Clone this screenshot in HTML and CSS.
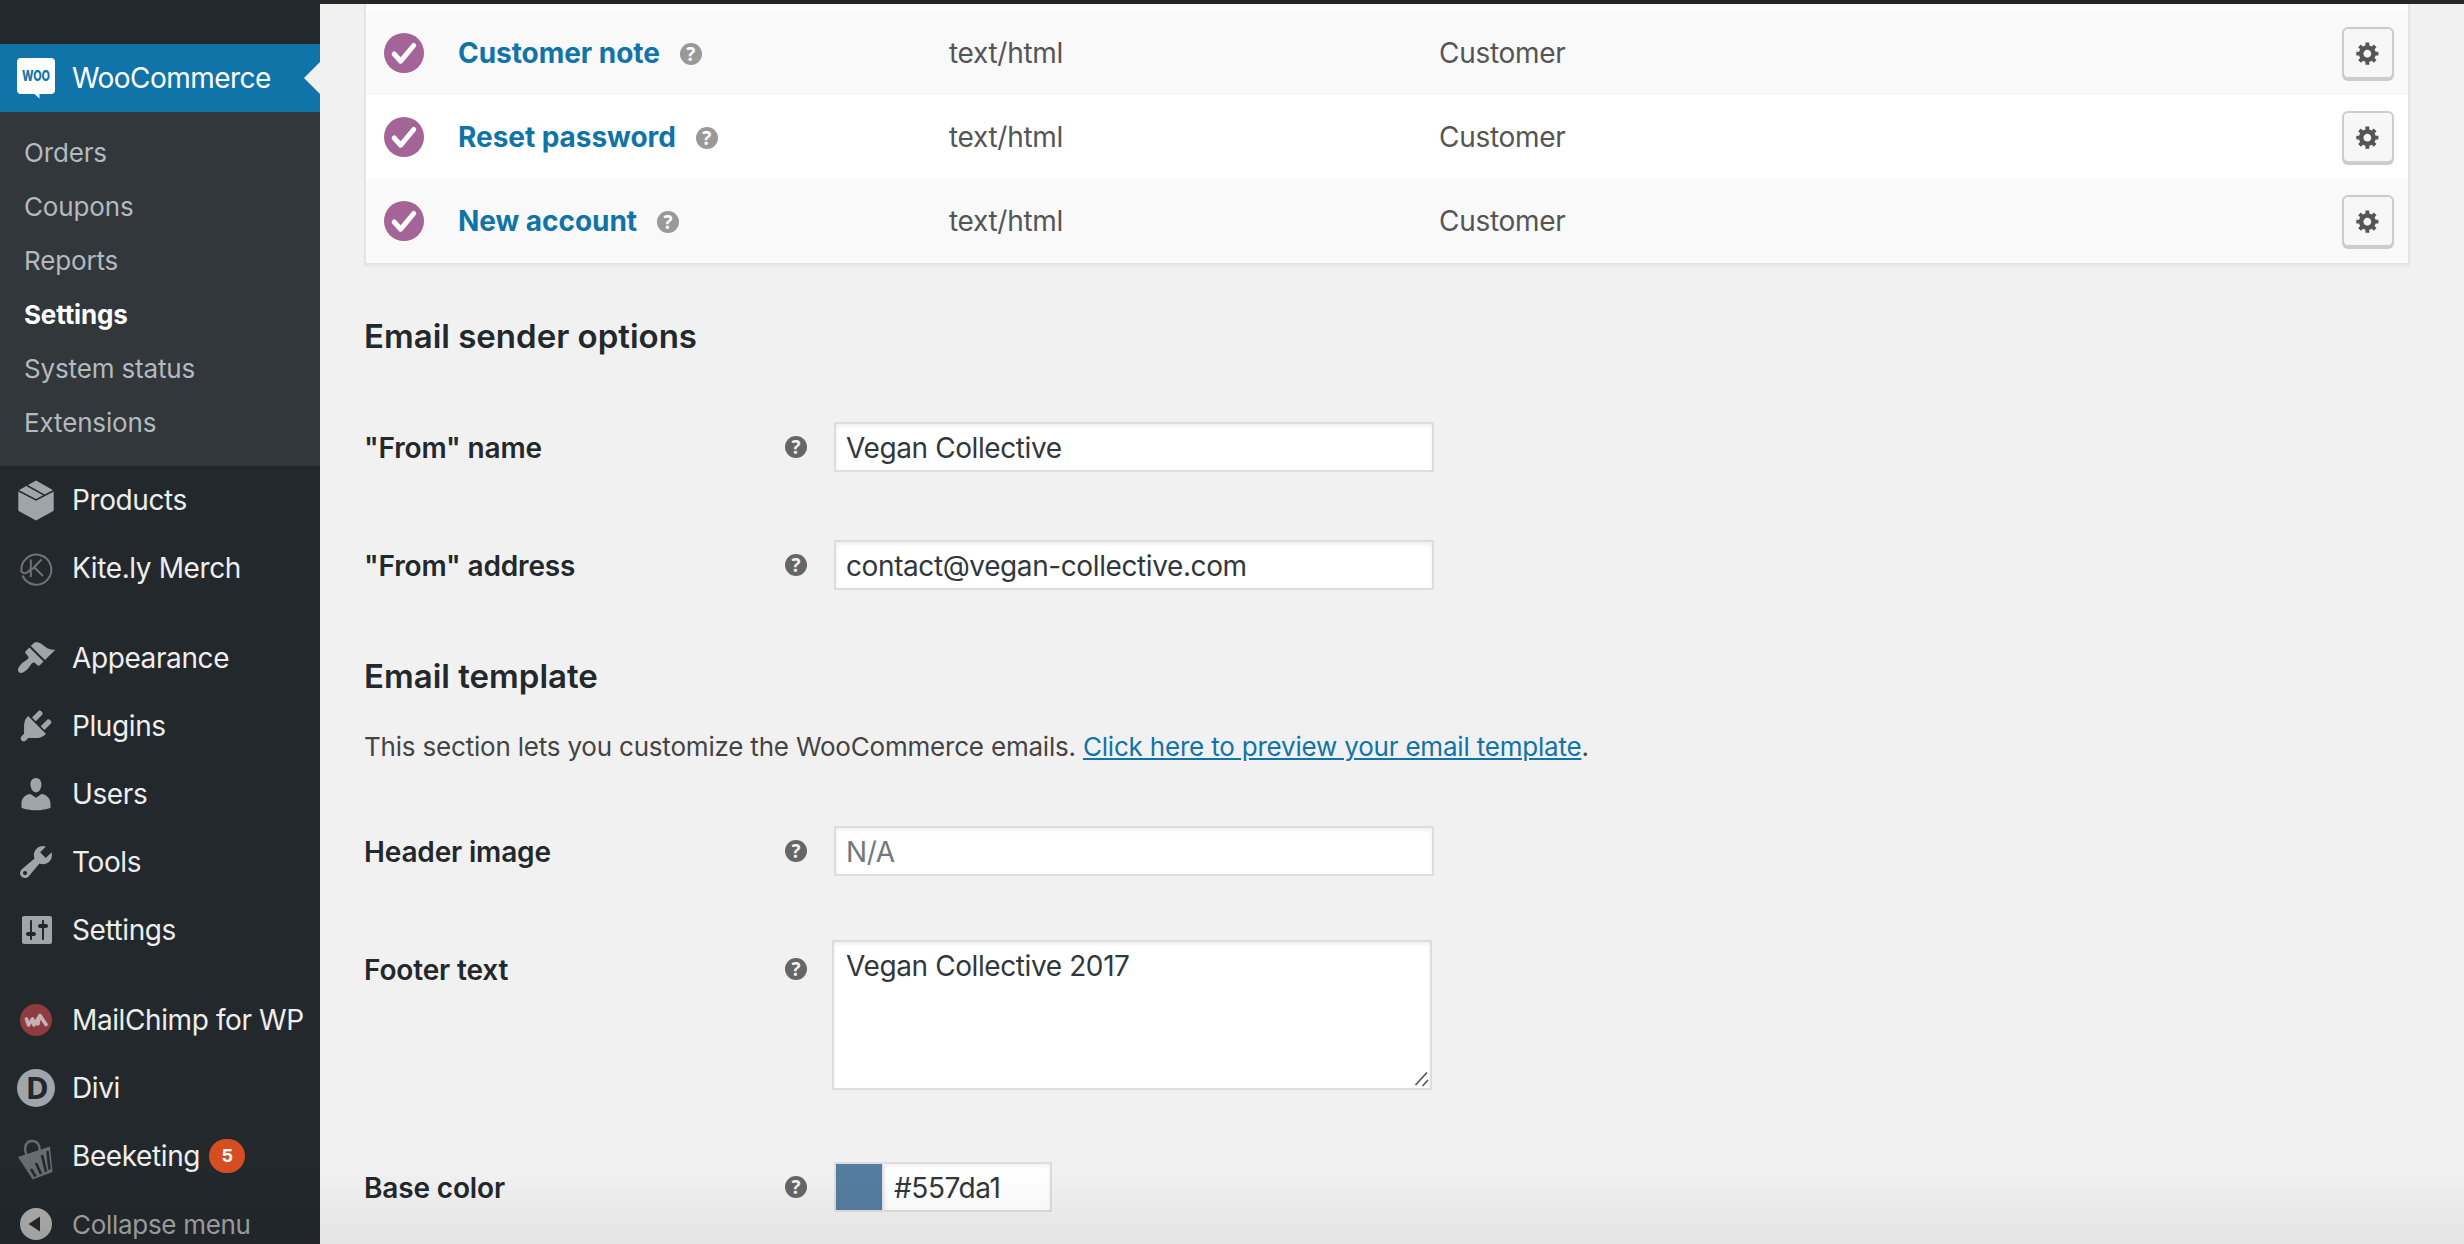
FILE: index.html
```html
<!DOCTYPE html>
<html lang="en">
<head>
    <meta charset="UTF-8">
    <meta name="viewport" content="width=device-width, initial-scale=1.0">
    <title>WooCommerce settings</title>
    <link rel="stylesheet" href="styles.css">
</head>
<body>
    <div class="admin-bar"></div>

    <div class="layout">
        <nav class="admin-menu">
            <a class="menu-item current">
                <svg class="icon" viewBox="0 0 40 40">
                    <path fill="#fff" d="M5 0h30a4 4 0 0 1 4 4v28a4 4 0 0 1-4 4H23.500v4.500L18.500 36H5a4 4 0 0 1-4-4V4a4 4 0 0 1 4-4z"/>
                    <text class="woo-mark" x="6" y="22.500" textLength="28" lengthAdjust="spacingAndGlyphs">Woo</text>
                </svg>
                <span>WooCommerce</span>
            </a>
            <ul class="submenu">
                <li>Orders</li>
                <li>Coupons</li>
                <li>Reports</li>
                <li class="active">Settings</li>
                <li>System status</li>
                <li>Extensions</li>
            </ul>

            <a class="menu-item">
                <svg class="icon" viewBox="0 0 40 40">
                    <path d="M20 .5l17.700 10v20.200L20 40.500 2.300 30.700V10.500z"/>
                    <path class="cut" d="M2 10.500l18 9.300 18-9.300M11 5.500l17.700 9.800"/>
                </svg>
                <span>Products</span>
            </a>
            <a class="menu-item">
                <svg class="icon" viewBox="0 0 40 40">
                    <g fill="none" stroke="#6f7377" stroke-width="2">
                        <path d="M5.500 24a15 15 0 1 1 1 3.500M5.500 24c4 3 7 0 10-3.500"/>
                        <path d="M14.800 11.500v17.500M25.500 11.500l-9.500 10M18.500 19.500l8.500 8.500"/>
                    </g>
                </svg>
                <span>Kite.ly Merch</span>
            </a>

            <div class="separator"></div>

            <a class="menu-item">
                <svg class="icon" viewBox="0 0 20 20"><path d="M14.480 11.060L7.410 3.990l1.500-1.500c.5-.56 2.300-.47 3.510.32 1.210.8 1.430 1.280 2.910 2.100 1.180.64 2.450 1.260 4.450.85zm-.71.71L6.700 4.700 4.930 6.470c-.39.39-.39 1.020 0 1.410l1.060 1.060c.39.39.39 1.030 0 1.420-.6.6-1.430 1.110-2.210 1.690-.35.26-.7.53-1.010.84C1.430 14.230.4 16.080 1.400 17.070c.99 1 2.840-.03 4.180-1.360.31-.31.58-.66.85-1.020.57-.78 1.080-1.610 1.690-2.210.39-.39 1.020-.39 1.410 0l1.060 1.060c.39.39 1.020.39 1.410 0z"/></svg>
                <span>Appearance</span>
            </a>
            <a class="menu-item">
                <svg class="icon" viewBox="0 0 20 20"><path d="M13.110 4.360L9.870 7.600 8 5.730l3.240-3.240c.35-.34 1.050-.2 1.560.32.52.51.66 1.210.31 1.550zm-8 1.770l.91-1.120 9.010 9.010-1.190.84c-.71.71-2.630 1.160-3.820 1.160H6.140L4.900 17.260c-.59.59-1.540.59-2.120 0-.59-.58-.59-1.530 0-2.120l1.240-1.240v-3.880c0-1.130.4-3.190 1.090-3.890zm7.260 3.970l3.240-3.240c.34-.35 1.040-.21 1.550.31.52.51.66 1.210.31 1.550l-3.240 3.250z"/></svg>
                <span>Plugins</span>
            </a>
            <a class="menu-item">
                <svg class="icon" viewBox="0 0 20 20"><path d="M10 9.250c-2.270 0-2.730-3.440-2.730-3.440C7 4.020 7.820 2 9.970 2c2.160 0 2.980 2.020 2.710 3.810 0 0-.41 3.440-2.680 3.440zm0 2.570L12.720 10c2.390 0 4.520 2.330 4.520 4.530v2.490s-3.650 1.130-7.240 1.130c-3.650 0-7.240-1.130-7.240-1.130v-2.490c0-2.250 1.940-4.480 4.470-4.480z"/></svg>
                <span>Users</span>
            </a>
            <a class="menu-item">
                <svg class="icon" viewBox="0 0 20 20"><path d="M16.680 9.770c-1.340 1.340-3.300 1.670-4.950.99l-5.410 6.520c-.99.99-2.590.99-3.580 0s-.99-2.590 0-3.570l6.520-5.420c-.68-1.650-.35-3.610.99-4.950 1.280-1.280 3.120-1.620 4.720-1.060l-2.890 2.890 2.820 2.820 2.860-2.870c.53 1.580.18 3.390-1.080 4.650zM3.810 16.210c.4.39 1.040.39 1.430 0 .4-.4.4-1.040 0-1.430-.39-.4-1.030-.4-1.430 0-.39.39-.39 1.030 0 1.430z"/></svg>
                <span>Tools</span>
            </a>
            <a class="menu-item">
                <svg class="icon" viewBox="0 0 20 20"><path d="M18 16V4c0-.55-.45-1-1-1H4c-.55 0-1 .45-1 1v12c0 .55.45 1 1 1h13c.55 0 1-.45 1-1zM8 11h1c.55 0 1 .45 1 1s-.45 1-1 1H8v1.500c0 .28-.22.5-.5.5s-.5-.22-.5-.5V13H6c-.55 0-1-.45-1-1s.45-1 1-1h1V5.500c0-.28.22-.5.5-.5s.5.22.5.5V11zm5-2h-1c-.55 0-1-.45-1-1s.45-1 1-1h1V5.500c0-.28.22-.5.5-.5s.5.22.5.5V7h1c.55 0 1 .45 1 1s-.45 1-1 1h-1v5.500c0 .28-.22.5-.5.5s-.5-.22-.5-.5V9z"/></svg>
                <span>Settings</span>
            </a>

            <div class="separator"></div>

            <a class="menu-item">
                <svg class="icon" viewBox="0 0 40 40">
                    <circle cx="20" cy="20" r="16" fill="#8f3b40"/>
                    <path fill="none" stroke="#c5b3b4" stroke-width="3.600" stroke-linejoin="round" stroke-linecap="round" d="M10.500 19l2 6 4-6 1.500 6 6-9.500 6 9M23.500 16l-1.500 8"/>
                </svg>
                <span>MailChimp for WP</span>
            </a>
            <a class="menu-item">
                <svg class="icon" viewBox="0 0 40 40">
                    <circle cx="20" cy="20" r="19"/>
                    <text class="divi-mark" x="21" y="31" text-anchor="middle">D</text>
                </svg>
                <span>Divi</span>
            </a>
            <a class="menu-item">
                <svg class="icon" viewBox="0 0 40 40">
                    <path fill="none" stroke="#676c70" stroke-width="2.400" d="M10.500 19C7 10 11 5 16 5s8 3.500 7.500 9"/>
                    <path fill="#676c70" d="M2 21L34 10.500l2.500 25.500L16.700 43.500z"/>
                    <path class="cut bag" d="M15 33l4.500 7.500M20 27l5 11M26 19l4 17M31.500 15l2 18.500"/>
                </svg>
                <span>Beeketing</span>
                <span class="badge">5</span>
            </a>
            <a class="menu-item collapse">
                <svg class="icon" viewBox="0 0 40 40"><path fill-rule="evenodd" d="M20 4a16 16 0 1 0 0 32 16 16 0 0 0 0-32zM24 12.500v15L12.500 20z"/></svg>
                <span>Collapse menu</span>
            </a>
        </nav>

        <main class="content">
            <table class="emails">
                <colgroup>
                    <col class="col-status">
                    <col class="col-name">
                    <col class="col-type">
                    <col>
                    <col class="col-actions">
                </colgroup>
                <tr>
                    <td><svg class="check" viewBox="0 0 40 40"><circle cx="20" cy="20" r="20"/><path d="M10.200 21l6.500 7.200L29.700 12.500"/></svg></td>
                    <td><a class="email-name">Customer note</a><span class="help light">?</span></td>
                    <td>text/html</td>
                    <td>Customer</td>
                    <td><button class="manage"><svg viewBox="0 0 20 20"><use href="#gear"/></svg></button></td>
                </tr>
                <tr>
                    <td><svg class="check" viewBox="0 0 40 40"><circle cx="20" cy="20" r="20"/><path d="M10.200 21l6.500 7.200L29.700 12.500"/></svg></td>
                    <td><a class="email-name">Reset password</a><span class="help light">?</span></td>
                    <td>text/html</td>
                    <td>Customer</td>
                    <td><button class="manage"><svg viewBox="0 0 20 20"><use href="#gear"/></svg></button></td>
                </tr>
                <tr>
                    <td><svg class="check" viewBox="0 0 40 40"><circle cx="20" cy="20" r="20"/><path d="M10.200 21l6.500 7.200L29.700 12.500"/></svg></td>
                    <td><a class="email-name">New account</a><span class="help light">?</span></td>
                    <td>text/html</td>
                    <td>Customer</td>
                    <td><button class="manage"><svg viewBox="0 0 20 20"><path id="gear" d="M18 12h-2.180c-.17.7-.44 1.350-.81 1.930l1.540 1.540-2.100 2.100-1.540-1.540c-.58.36-1.230.63-1.910.79V19H8v-2.180c-.68-.16-1.330-.43-1.910-.79l-1.540 1.540-2.120-2.120 1.540-1.540c-.36-.58-.63-1.230-.79-1.910H1V9.030h2.170c.16-.7.44-1.350.8-1.940L2.430 5.550l2.100-2.100 1.540 1.540c.58-.37 1.240-.64 1.930-.81V2h3v2.180c.68.16 1.330.43 1.910.79l1.540-1.540 2.120 2.120-1.540 1.540c.36.59.64 1.240.8 1.940H18V12zm-8.500 1.500c1.660 0 3-1.340 3-3s-1.340-3-3-3-3 1.340-3 3 1.340 3 3 3z"/></svg></button></td>
                </tr>
            </table>

            <h2>Email sender options</h2>
            <div class="form">
                <div class="form-row">
                    <label for="from-name">"From" name</label>
                    <span class="help">?</span>
                    <input type="text" id="from-name" value="Vegan Collective">
                </div>
                <div class="form-row">
                    <label for="from-address">"From" address</label>
                    <span class="help">?</span>
                    <input type="text" id="from-address" value="contact@vegan-collective.com">
                </div>
            </div>

            <h2>Email template</h2>
            <p>This section lets you customize the WooCommerce emails. <a class="preview">Click here to preview your email template</a>.</p>
            <div class="form">
                <div class="form-row">
                    <label for="header-image">Header image</label>
                    <span class="help">?</span>
                    <input type="text" id="header-image" placeholder="N/A">
                </div>
                <div class="form-row tall">
                    <label for="footer-text">Footer text</label>
                    <span class="help">?</span>
                    <div class="textarea-wrap">
                        <textarea id="footer-text">Vegan Collective 2017</textarea>
                        <svg class="grip" viewBox="0 0 16 16"><path d="M1.500 13L13 .5M8.500 14l5.500-6"/></svg>
                    </div>
                </div>
                <div class="form-row">
                    <label for="base-color">Base color</label>
                    <span class="help">?</span>
                    <div class="color-field">
                        <span class="swatch"></span>
                        <input type="text" id="base-color" value="#557da1">
                    </div>
                </div>
            </div>
        </main>
    </div>
    <div class="bottom-shade"></div>
</body>
</html>
```
FILE: styles.css
```css
:root {
    --menu-bg: #23282d;
    --submenu-bg: #32373c;
    --blue: #1074a8;
    --page-bg: #f1f1f1;
    --icon: #a0a5aa;
    --border: #ddd;
}

*, *::before, *::after {
    box-sizing: border-box;
    margin: 0;
    padding: 0;
}

body {
    height: 1244px;
    overflow: hidden;
    font-family: Inter, sans-serif;
    font-size: 28px;
    color: #444;
    background: var(--page-bg);
}

.admin-bar {
    height: 4px;
    background: var(--menu-bg);
}

.layout {
    display: flex;
    height: 1240px;
    overflow: hidden;
}

/* Side menu */
.admin-menu {
    flex: none;
    width: 320px;
    padding-top: 40px;
    background: var(--menu-bg);
}
.menu-item {
    position: relative;
    display: flex;
    align-items: center;
    height: 68px;
    padding-left: 16px;
    color: #eee;
    white-space: nowrap;
    letter-spacing: -0.4px;
}
.menu-item.current {
    background: var(--blue);
    color: #fff;
    letter-spacing: -0.55px;
}
.menu-item.current::after {
    content: "";
    position: absolute;
    right: 0;
    top: 18px;
    border: 16px solid transparent;
    border-left: 0;
    border-right-color: var(--page-bg);
}
.icon {
    flex: none;
    width: 40px;
    height: 40px;
    margin-right: 16px;
    fill: var(--icon);
    overflow: visible;
}
.icon .cut {
    fill: none;
    stroke: var(--menu-bg);
    stroke-width: 1.5;
}
.icon .bag {
    stroke-width: 2.6;
}
.woo-mark {
    font-size: 15px;
    font-weight: 800;
    letter-spacing: 0;
    text-transform: uppercase;
    fill: var(--blue);
}
.divi-mark {
    font-family: "Open Sans", sans-serif;
    font-size: 31px;
    font-weight: 700;
    fill: var(--menu-bg);
}
.submenu {
    list-style: none;
    height: 354px;
    padding: 14px 0 14px 24px;
    background: var(--submenu-bg);
    color: #b4b9be;
    font-size: 26px;
    letter-spacing: -0.15px;
}
.submenu li {
    height: 54px;
    line-height: 54px;
}
.submenu .active {
    color: #fff;
    font-weight: 700;
}
.separator {
    height: 22px;
}
.badge {
    width: 36px;
    height: 34px;
    margin-left: 9px;
    border-radius: 17px;
    background: #d54e21;
    color: #fff;
    font-size: 18px;
    font-weight: 700;
    line-height: 34px;
    text-align: center;
}
.collapse {
    color: #a0a0a0;
    font-size: 26px;
    letter-spacing: -0.3px;
}
.collapse .icon {
    fill: #aaa;
}

/* Email list */
.content {
    flex: 1;
    padding: 0 54px 0 44px;
}
.emails {
    width: 100%;
    table-layout: fixed;
    border-collapse: separate;
    border-spacing: 0;
    padding-top: 7px;
    border: 2px solid #e5e5e5;
    border-top: 0;
    background: #fff;
    box-shadow: 0 2px 2px rgba(0, 0, 0, 0.04);
    color: #555;
    letter-spacing: -0.3px;
}
.col-status { width: 92px; }
.col-name { width: 491px; }
.col-type { width: 490px; }
.col-actions { width: 66px; }
.emails td {
    height: 84px;
    vertical-align: middle;
}
.emails tr:nth-child(odd) td {
    background: #f9f9f9;
}
.check {
    display: block;
    width: 40px;
    height: 40px;
    margin-left: 18px;
    fill: #a46497;
}
.check path {
    fill: none;
    stroke: #fff;
    stroke-width: 5;
    stroke-linecap: round;
    stroke-linejoin: round;
}
.email-name {
    color: var(--blue);
    font-weight: 700;
    letter-spacing: -0.05px;
}
.help {
    display: inline-block;
    width: 22px;
    height: 22px;
    border-radius: 50%;
    background: #666;
    color: #f1f1f1;
    font-family: "Open Sans", sans-serif;
    font-size: 19px;
    font-weight: 700;
    line-height: 22px;
    text-align: center;
    letter-spacing: 0;
}
.help.light {
    margin-left: 20px;
    background: #999;
    color: #fff;
    vertical-align: 2px;
}
.manage {
    display: flex;
    align-items: center;
    justify-content: center;
    width: 52px;
    height: 52px;
    border: 2px solid #ccc;
    border-radius: 6px;
    background: #f7f7f7;
    box-shadow: 0 2px 0 #ccc;
}
.manage svg {
    width: 26px;
    height: 26px;
    fill: #555;
}

/* Form sections */
h2 {
    margin-top: 49px;
    color: #23282d;
    font-size: 33px;
    font-weight: 600;
    line-height: 44px;
}
.form {
    padding-top: 30px;
}
.form + h2 {
    margin-top: 30px;
}
p {
    margin-top: 29px;
    font-size: 26px;
    line-height: 40px;
    letter-spacing: -0.2px;
}
p + .form {
    padding-top: 25px;
}
.preview {
    color: var(--blue);
    text-decoration: underline;
}
.form-row {
    display: grid;
    grid-template-columns: 421px 49px auto;
    justify-content: start;
    align-items: center;
    height: 118px;
}
.form-row label {
    padding-top: 1px;
    color: #23282d;
    font-weight: 600;
    letter-spacing: -0.15px;
}
.form-row input,
.form-row textarea {
    display: block;
    width: 600px;
    height: 50px;
    padding: 1px 10px 0;
    border: 2px solid var(--border);
    background: #fff;
    box-shadow: inset 0 2px 4px rgba(0, 0, 0, 0.07);
    color: #32373c;
    font-family: inherit;
    font-size: 28px;
    letter-spacing: -0.4px;
    outline: none;
}
.form-row input::placeholder {
    color: #72777c;
}
.form-row.tall {
    height: 218px;
    align-items: start;
    padding-top: 30px;
}
.tall label {
    padding-top: 0;
    line-height: 60px;
}
.tall .help {
    margin-top: 18px;
}
.textarea-wrap {
    position: relative;
    margin-left: -2px;
}
.form-row textarea {
    height: 150px;
    padding: 6px 12px;
    line-height: 36px;
    resize: none;
}
.grip {
    position: absolute;
    right: 2px;
    bottom: 2px;
    width: 16px;
    height: 16px;
    fill: none;
    stroke: #555;
    stroke-width: 1.6;
}
.color-field {
    display: flex;
}
.swatch {
    width: 49px;
    height: 50px;
    border: 2px solid var(--border);
    border-right: 1px solid var(--border);
    background: #557da1;
}
.form-row .color-field input {
    width: 169px;
    padding-left: 9px;
    border-left-color: #eee;
}

.bottom-shade {
    position: fixed;
    left: 0;
    right: 0;
    bottom: 0;
    height: 74px;
    background: linear-gradient(rgba(0, 0, 0, 0), rgba(0, 0, 0, 0.05));
    pointer-events: none;
}
```
